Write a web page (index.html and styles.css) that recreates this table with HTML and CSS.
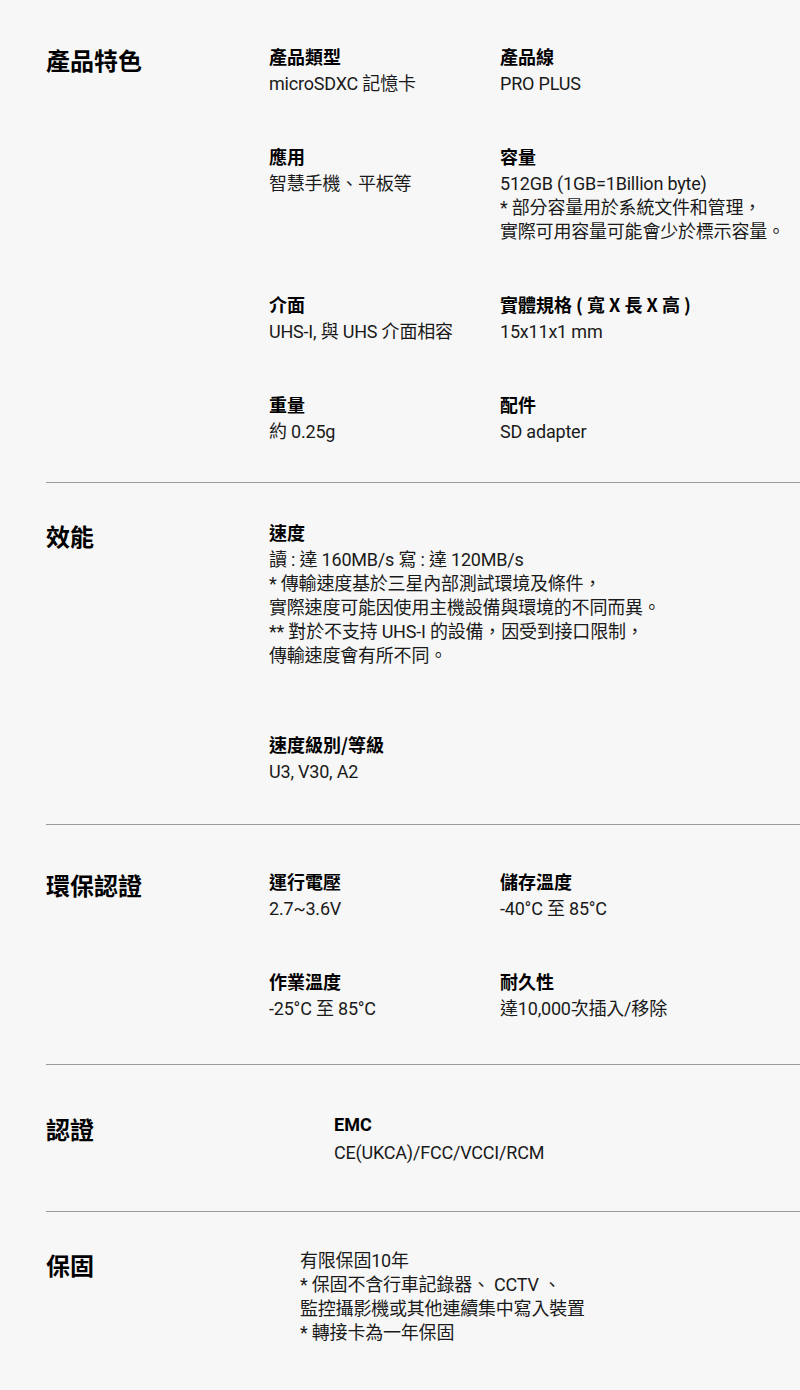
FILE: index.html
```html
<!DOCTYPE html>
<html lang="zh-Hant">
<head>
<meta charset="utf-8">
<title>規格</title>
<link rel="stylesheet" href="styles.css">
</head>
<body>
<main class="specs">
  <section class="spec spec--features">
    <h2 class="spec__title">產品特色</h2>
    <div class="spec__grid">
      <div class="item"><h3 class="item__label">產品類型</h3><p class="item__value">microSDXC 記憶卡</p></div>
      <div class="item"><h3 class="item__label">產品線</h3><p class="item__value">PRO PLUS</p></div>
      <div class="item"><h3 class="item__label">應用</h3><p class="item__value">智慧手機、平板等</p></div>
      <div class="item"><h3 class="item__label">容量</h3><p class="item__value">512GB (1GB=1Billion byte)<br>* 部分容量用於系統文件和管理，<br>實際可用容量可能會少於標示容量。</p></div>
      <div class="item"><h3 class="item__label">介面</h3><p class="item__value">UHS-I, 與 UHS 介面相容</p></div>
      <div class="item"><h3 class="item__label">實體規格 ( 寬 X 長 X 高 )</h3><p class="item__value">15x11x1 mm</p></div>
      <div class="item"><h3 class="item__label">重量</h3><p class="item__value">約 0.25g</p></div>
      <div class="item"><h3 class="item__label">配件</h3><p class="item__value">SD adapter</p></div>
    </div>
  </section>

  <section class="spec spec--perf">
    <h2 class="spec__title">效能</h2>
    <div class="spec__grid spec__grid--single">
      <div class="item"><h3 class="item__label">速度</h3><p class="item__value">讀 : 達 160MB/s 寫 : 達 120MB/s<br>* 傳輸速度基於三星內部測試環境及條件，<br>實際速度可能因使用主機設備與環境的不同而異。<br>** 對於不支持 UHS-I 的設備，因受到接口限制，<br>傳輸速度會有所不同。</p></div>
      <div class="item"><h3 class="item__label">速度級別/等級</h3><p class="item__value">U3, V30, A2</p></div>
    </div>
  </section>

  <section class="spec spec--eco">
    <h2 class="spec__title">環保認證</h2>
    <div class="spec__grid">
      <div class="item"><h3 class="item__label">運行電壓</h3><p class="item__value">2.7~3.6V</p></div>
      <div class="item"><h3 class="item__label">儲存溫度</h3><p class="item__value">-40°C 至 85°C</p></div>
      <div class="item"><h3 class="item__label">作業溫度</h3><p class="item__value">-25°C 至 85°C</p></div>
      <div class="item"><h3 class="item__label">耐久性</h3><p class="item__value">達10,000次插入/移除</p></div>
    </div>
  </section>

  <section class="spec spec--cert">
    <h2 class="spec__title">認證</h2>
    <div class="spec__grid spec__grid--cert">
      <div class="item"><h3 class="item__label item__label--latin">EMC</h3><p class="item__value">CE(UKCA)/FCC/VCCI/RCM</p></div>
    </div>
  </section>

  <section class="spec spec--warranty">
    <h2 class="spec__title">保固</h2>
    <div class="spec__grid spec__grid--warranty">
      <div class="item"><p class="item__value">有限保固10年<br>* 保固不含行車記錄器、 CCTV 、<br>監控攝影機或其他連續集中寫入裝置<br>* 轉接卡為一年保固</p></div>
    </div>
  </section>
</main>
</body>
</html>
```

FILE: styles.css
```css
html, body {
  margin: 0;
  padding: 0;
  background: #f7f7f7;
}

body {
  font-family: Roboto, "Noto Sans CJK TC", sans-serif;
  color: #000;
}

.specs {
  padding-left: 46px;
}

.spec {
  display: flex;
  border-bottom: 1px solid #9a9a9a;
}

.spec:last-child {
  border-bottom: none;
}

.spec__title {
  flex: 0 0 223px;
  margin: 0;
  font-size: 24px;
  line-height: 32px;
  font-weight: 700;
  font-family: "Noto Sans CJK TC", sans-serif;
}

.spec__grid {
  display: grid;
  grid-template-columns: 231px 1fr;
  row-gap: 48px;
  align-content: start;
}

.spec__grid--single {
  grid-template-columns: 1fr;
  row-gap: 64px;
}

.spec__grid--cert {
  grid-template-columns: 1fr;
  padding-left: 65px;
}

.spec__grid--warranty {
  grid-template-columns: 1fr;
  padding-left: 31px;
}

.item__label {
  margin: 0 0 4px;
  font-size: 18px;
  line-height: 24px;
  font-weight: 700;
  font-family: "Noto Sans CJK TC", sans-serif;
}

.item__label--latin {
  font-family: Roboto, "Noto Sans CJK TC", sans-serif;
}

.item__value {
  margin: 0;
  font-size: 18px;
  line-height: 24px;
  font-weight: 400;
  letter-spacing: -0.2px;
  color: #1a1a1a;
}

.spec--features { padding: 44px 0 38px; }
.spec--perf { padding: 37px 0 40px; }
.spec--eco { padding: 44px 0 43px; }
.spec--cert { padding: 48px 0 46px; }
.spec--warranty { padding: 37px 0 40px; }
```
